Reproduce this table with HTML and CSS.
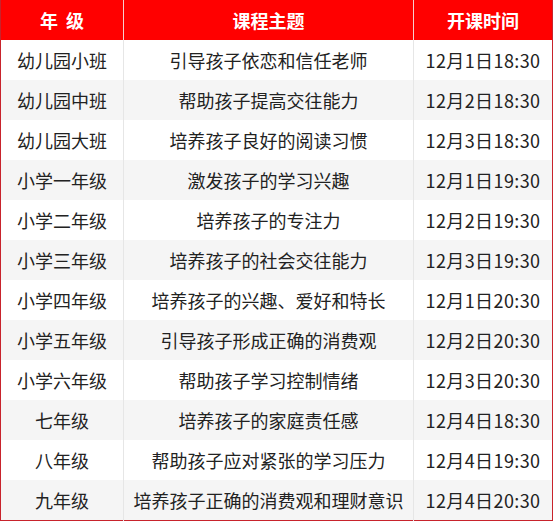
FILE: index.html
```html
<!DOCTYPE html>
<html lang="zh">
<head>
<meta charset="utf-8">
<link rel="stylesheet" href="styles.css">
</head>
<body>
<table class="schedule">
  <thead>
    <tr><th class="c1">年&nbsp;&nbsp;级</th><th class="c2">课程主题</th><th class="c3">开课时间</th></tr>
  </thead>
  <tbody>
    <tr><td>幼儿园小班</td><td>引导孩子依恋和信任老师</td><td class="time">12月1日18:30</td></tr>
    <tr><td>幼儿园中班</td><td>帮助孩子提高交往能力</td><td class="time">12月2日18:30</td></tr>
    <tr><td>幼儿园大班</td><td>培养孩子良好的阅读习惯</td><td class="time">12月3日18:30</td></tr>
    <tr><td>小学一年级</td><td>激发孩子的学习兴趣</td><td class="time">12月1日19:30</td></tr>
    <tr><td>小学二年级</td><td>培养孩子的专注力</td><td class="time">12月2日19:30</td></tr>
    <tr><td>小学三年级</td><td>培养孩子的社会交往能力</td><td class="time">12月3日19:30</td></tr>
    <tr><td>小学四年级</td><td>培养孩子的兴趣、爱好和特长</td><td class="time">12月1日20:30</td></tr>
    <tr><td>小学五年级</td><td>引导孩子形成正确的消费观</td><td class="time">12月2日20:30</td></tr>
    <tr><td>小学六年级</td><td>帮助孩子学习控制情绪</td><td class="time">12月3日20:30</td></tr>
    <tr><td>七年级</td><td>培养孩子的家庭责任感</td><td class="time">12月4日18:30</td></tr>
    <tr><td>八年级</td><td>帮助孩子应对紧张的学习压力</td><td class="time">12月4日19:30</td></tr>
    <tr><td>九年级</td><td>培养孩子正确的消费观和理财意识</td><td class="time">12月4日20:30</td></tr>
  </tbody>
</table>
</body>
</html>
```
FILE: styles.css
```css
html, body {
  margin: 0;
  padding: 0;
  background: #ffffff;
}
.schedule {
  width: 553px;
  border-collapse: collapse;
  table-layout: fixed;
  font-family: "Microsoft YaHei", "Noto Sans CJK SC", "Noto Sans", sans-serif;
  font-size: 18px;
  color: #222;
  border-left: 1px solid #c8232c;
  border-right: 1px solid #c8232c;
  border-bottom: 1px solid #c8232c;
}
.schedule th {
  background: #ff0000;
  color: #fff;
  font-weight: bold;
  height: 40px;
  padding: 0;
  text-align: center;
  border-left: 1px solid #f6d0d0;
  line-height: 22px;
}
.schedule th:first-child { border-left: none; }
.schedule .c1 { width: 122px; }
.schedule .c3 { width: 138px; }
.schedule td {
  height: 40px;
  padding: 0;
  text-align: center;
  border-left: 1px solid #e6e6e6;
  line-height: 22px;
  white-space: nowrap;
}
.schedule td.time { letter-spacing: 0.4px; }
.schedule td:first-child { border-left: none; }
.schedule tbody tr:nth-child(even) td { background: #f5f5f5; }
```
